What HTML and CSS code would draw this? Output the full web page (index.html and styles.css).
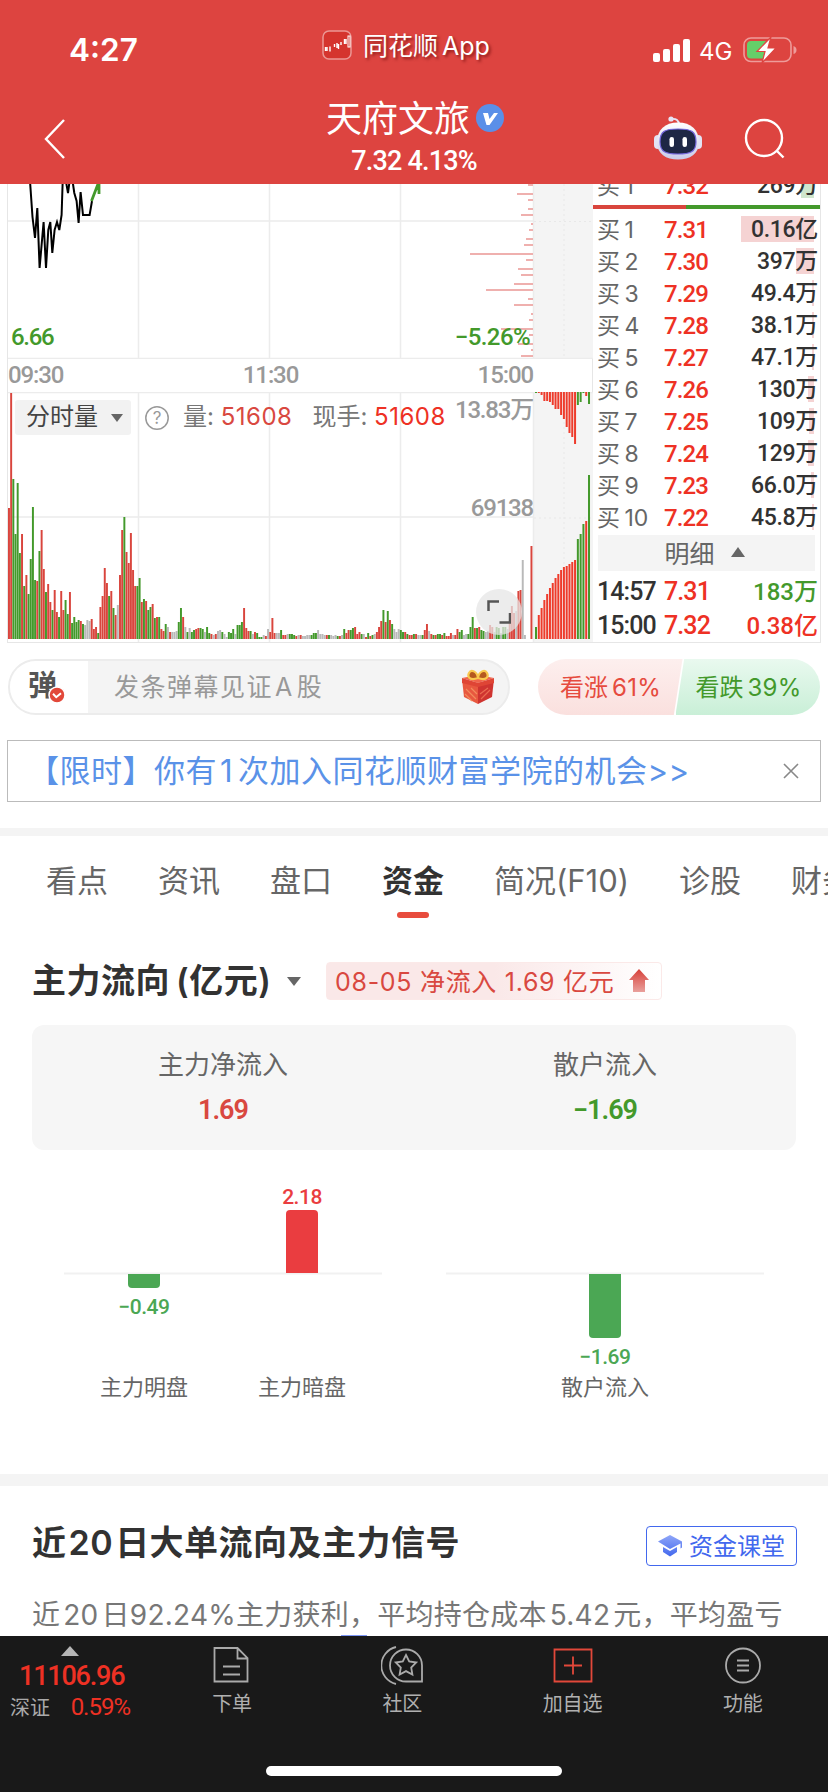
FILE: index.html
```html
<!DOCTYPE html>
<html lang="zh-CN">
<head>
    <meta charset="UTF-8">
    <meta name="viewport" content="width=device-width, initial-scale=1.0">
    <title>天府文旅 - 同花顺</title>
    <link rel="stylesheet" href="styles.css">
</head>
<body>
    <header>
        <div class="status-bar">
            <span class="time">4:27</span>
            <div class="app-name">
                <svg width="30" height="30" viewBox="0 0 30 30">
                    <rect x="1" y="1" width="28" height="28" rx="6" fill="#d5342e" stroke="#eb9794" stroke-width="1.5"/>
                    <path d="M3.5 17v4M5 17v4M8 16.5v5M12.5 17v-3M15 13v5M16.5 14v5M19 12v3M22.500 9v5M24 9v5" stroke="#fff" stroke-width="1.4"/>
                    <rect x="26" y="6" width="2" height="11" fill="none" stroke="#fff"/>
                </svg>
                <span>同花顺<b>App</b></span>
            </div>
            <div class="signal">
                <svg width="37" height="23" viewBox="0 0 37 23" fill="#fff">
                    <rect x="0" y="14" width="7" height="9" rx="2"/>
                    <rect x="10" y="10" width="7" height="13" rx="2"/>
                    <rect x="20" y="5" width="7" height="18" rx="2"/>
                    <rect x="30" y="0" width="7" height="23" rx="2"/>
                </svg>
                <span>4G</span>
                <svg width="54" height="28" viewBox="0 0 54 28">
                    <rect x="1" y="2" width="47" height="23.500" rx="7" fill="none" stroke="#ee9c9a" stroke-width="1.6"/>
                    <path d="M50.500 10q3 1 3 4t-3 4z" fill="#ee9c9a"/>
                    <path d="M8 5h15L16 14h5v8.500H8q-4 0-4-4V9q0-4 4-4z" fill="#65cf69"/>
                    <path d="M28 1L14 15.500h8L19 27l14-15h-8z" fill="#fff" stroke="#dd4440" stroke-width="1.200"/>
                </svg>
            </div>
        </div>
        <div class="nav-bar">
            <svg class="back" width="24" height="42" viewBox="0 0 24 42"><path d="M21 2L3 21l18 19" fill="none" stroke="#fff" stroke-width="2.400"/></svg>
            <div class="stock">
                <h1>天府文旅
                    <svg width="28" height="28" viewBox="0 0 28 28">
                        <circle cx="14" cy="14" r="14" fill="#5a8fe8"/>
                        <path d="M7 9h5l1.500 6L18 9h4l-8.500 12h-3z" fill="#fff"/>
                    </svg>
                </h1>
                <p class="num">7.32 4.13%</p>
            </div>
            <div class="nav-icons">
                <svg width="50" height="46" viewBox="0 0 50 46">
                    <defs>
                        <linearGradient id="head" x1="0" y1="0" x2="0" y2="1"><stop offset="0" stop-color="#fff"/><stop offset="1" stop-color="#c9cbe9"/></linearGradient>
                    </defs>
                    <path d="M18 3q8-1 8 6" fill="none" stroke="#e6e4f5" stroke-width="2"/>
                    <circle cx="18" cy="3" r="2.600" fill="#e6e4f5"/>
                    <rect x="1" y="19" width="8" height="14" rx="4" fill="#e3e3f4"/>
                    <rect x="41" y="19" width="8" height="14" rx="4" fill="#e3e3f4"/>
                    <path d="M25 6.500C38 6.500 46 14 46 26c0 12-9 17.500-21 17.500S4 38 4 26C4 14 12 6.500 25 6.500z" fill="url(#head)"/>
                    <path d="M25 13c13 0 18 2 18 13 0 10-6 12-18 12S7 36 7 26c0-11 5-13 18-13z" fill="#1e2745" stroke="#7467dc" stroke-width="1.200"/>
                    <rect x="16.500" y="21" width="4.500" height="10" rx="2.200" fill="#fff"/>
                    <rect x="29.500" y="21" width="4.500" height="10" rx="2.200" fill="#fff"/>
                </svg>
                <svg width="42" height="42" viewBox="0 0 42 42" fill="none" stroke="#fff" stroke-width="2.400">
                    <circle cx="20" cy="20" r="18"/>
                    <path d="M32.500 32.500l7 7"/>
                </svg>
            </div>
        </div>
    </header>

    <main>
        <!-- 分时走势 + 五档盘口 -->
        <section class="quote">
            <div class="charts">
                <div class="price-chart">
                    <svg id="price-svg" width="585" height="175" viewBox="0 0 585 175">
                        <rect x="525" y="0" width="60" height="175" fill="#f4f4f4"/>
                        <path d="M130.500 0v175M261.500 0v175M392.500 0v175M525.500 0v175M0 37h525M0 174.500h585" stroke="#ececec" stroke-width="1.500" fill="none"/>
                        <path d="M556 0v175M526 37.500h59" stroke="#e8e8e8" stroke-dasharray="2 3"/>
                        <polyline points="22,-3 24.500,33 27,54 29.300,24 31.600,84 35.600,38 38,84 40.300,46 42.300,38 44.300,69 46.600,46 49,38 51.300,46 53.600,31 54.600,0 57,-8 60,9 62,-6 65,0 66.300,9 68.600,17 70.600,39 72.600,8 75,31 81.600,31 84,17" fill="none" stroke="#000" stroke-width="2"/>
                        <path d="M83.500 17L90 0l-1 6 2-6v10" fill="none" stroke="#43992b" stroke-width="2.800"/>
                    </svg>
                    <span class="low num">6.66</span>
                    <span class="low-rate num">−5.26%</span>
                </div>
                <div class="time-axis num"><span>09:30</span><span>11:30</span><span>15:00</span></div>
                <div class="volume-chart">
                    <svg id="volume-svg" width="585" height="250" viewBox="0 0 585 250">
                        <rect x="525" y="0" width="60" height="250" fill="#f4f4f4"/>
                        <path d="M0 .5h585M0 125h525M130.500 0v250M261.500 0v250M392.500 0v250M525.500 0v250" stroke="#ececec" stroke-width="1.500" fill="none"/>
                        <path d="M556 0v250M526 126h59" stroke="#e8e8e8" stroke-dasharray="2 3"/>
                    </svg>
                    <div class="volume-head">
                        <span class="select">分时量<i class="caret-down"></i></span>
                        <svg width="26" height="26" viewBox="0 0 26 26"><circle cx="13" cy="13" r="11.200" fill="none" stroke="#999" stroke-width="1.500"/><text x="13" y="19" text-anchor="middle" class="q">?</text></svg>
                        <span class="vol">量: <b>51608</b></span>
                        <span class="hand">现手: <b>51608</b></span>
                    </div>
                    <span class="vol-max num">13.83万</span>
                    <span class="vol-mid num">69138</span>
                    <span class="expand"><svg width="24" height="24" viewBox="0 0 24 24" fill="none" stroke="#555" stroke-width="2.500"><path d="M1.500 11V1.500H12M23 13v9.500H12.500"/></svg></span>
                </div>
            </div>
            <div class="book">
                <div class="book-clip"><div class="row"><span>买 1</span><b>7.32</b><em>269万</em><i class="sell" style="width:13px"></i></div></div>
                <div class="ratio"></div>
                <div class="row"><span>买 1</span><b>7.31</b><em>0.16亿</em><i style="width:73px"></i></div>
                <div class="row"><span>买 2</span><b>7.30</b><em>397万</em><i style="width:18px"></i></div>
                <div class="row"><span>买 3</span><b>7.29</b><em>49.4万</em><i style="width:2px"></i></div>
                <div class="row"><span>买 4</span><b>7.28</b><em>38.1万</em><i style="width:2px"></i></div>
                <div class="row"><span>买 5</span><b>7.27</b><em>47.1万</em><i style="width:2px"></i></div>
                <div class="row"><span>买 6</span><b>7.26</b><em>130万</em><i style="width:6px"></i></div>
                <div class="row"><span>买 7</span><b>7.25</b><em>109万</em><i style="width:5px"></i></div>
                <div class="row"><span>买 8</span><b>7.24</b><em>129万</em><i style="width:6px"></i></div>
                <div class="row"><span>买 9</span><b>7.23</b><em>66.0万</em><i style="width:3px"></i></div>
                <div class="row"><span>买 10</span><b>7.22</b><em>45.8万</em><i style="width:2px"></i></div>
                <div class="detail-title">明细<i class="caret-up"></i></div>
                <div class="row deal"><span>14:57</span><b>7.31</b><em class="green">183万</em></div>
                <div class="row deal"><span>15:00</span><b>7.32</b><em class="red">0.38亿</em></div>
            </div>
        </section>

        <!-- 弹幕 -->
        <section class="danmu">
            <div class="danmu-input">
                <span class="danmu-switch">弹
                    <svg width="18" height="18" viewBox="0 0 18 18"><circle cx="9" cy="9" r="8" fill="#e2483a" stroke="#fff" stroke-width="1.500"/><path d="M5 7.800l3.200 3.400L13 7.200" fill="none" stroke="#fff" stroke-width="2"/></svg>
                </span>
                <span class="danmu-text">发条弹幕见证<b>A</b>股</span>
                <svg class="gift" width="34" height="36" viewBox="0 0 34 36">
                    <path d="M1 10L17 14v21L3 28z" fill="#e8583f"/>
                    <path d="M33 10L17 14v21l14-7z" fill="#cf3430"/>
                    <path d="M1 9l16-3 16 3-16 5z" fill="#f0644c"/>
                    <path d="M1 9l16 5v4L1 14zM33 9l-16 5v4l16-4z" fill="#df4535"/>
                    <path d="M5 20l10 10M4 25l7 7M10 19l6 6" stroke="#f28b5c" stroke-width="1.200"/>
                    <path d="M20 30l9-9M19 25l8-6" stroke="#ea6a50" stroke-width="1.200"/>
                    <path d="M17 9C9 12 6 8 8 4s8-2 9 5zM17 9c8 3 11-1 9-5s-8-2-9 5z" fill="#b5591f" stroke="#f9c94e" stroke-width="2.200"/>
                </svg>
            </div>
            <div class="vote">
                <span class="up">看涨<b>61%</b></span>
                <span class="down">看跌<b>39%</b></span>
            </div>
        </section>

        <div class="notice">
            <a>【限时】你有<b>1</b>次加入同花顺财富学院的机会&gt;&gt;</a>
            <svg width="16" height="16" viewBox="0 0 16 16"><path d="M1 1l14 14M15 1L1 15" stroke="#888" stroke-width="1.600"/></svg>
        </div>

        <nav class="tabs">
            <a>看点</a><a>资讯</a><a>盘口</a><a class="active">资金</a><a>简况(F10)</a><a>诊股</a><a>财务</a>
        </nav>

        <section class="flow">
            <div class="flow-title">
                <h2>主力流向<span>(亿元)</span></h2>
                <i class="caret-down"></i>
                <div class="tag"><span>08-05 净流入 1.69 亿元</span>
                    <svg width="20" height="24" viewBox="0 0 20 24"><defs><linearGradient id="arrow" x1="0" y1="0" x2="0" y2="1"><stop offset="0" stop-color="#d73f38"/><stop offset="1" stop-color="#e9a09c"/></linearGradient></defs><path d="M10 0l10 11h-4v12H4V11H0z" fill="url(#arrow)"/></svg>
                </div>
            </div>
            <div class="summary">
                <div><p>主力净流入</p><strong class="num red">1.69</strong></div>
                <div><p>散户流入</p><strong class="num green">−1.69</strong></div>
            </div>
            <div class="bar-charts">
                <svg width="318" height="230" viewBox="0 0 318 230">
                    <path d="M0 94.500h318" stroke="#f1f1f1" stroke-width="2"/>
                    <path d="M64 95h32v10q0 4-4 4H68q-4 0-4-4z" fill="#4ba754"/>
                    <path d="M222 94V35q0-4 4-4h24q4 0 4 4v59z" fill="#ea3d40"/>
                    <text x="80" y="135" class="val g">−0.49</text>
                    <text x="238" y="25" class="val r">2.18</text>
                    <text x="80" y="216" class="cat">主力明盘</text>
                    <text x="238" y="216" class="cat">主力暗盘</text>
                </svg>
                <svg width="318" height="230" viewBox="0 0 318 230">
                    <path d="M0 94.500h318" stroke="#f1f1f1" stroke-width="2"/>
                    <path d="M143 95h32v60q0 4-4 4h-24q-4 0-4-4z" fill="#4ba754"/>
                    <text x="159" y="185" class="val g">−1.69</text>
                    <text x="159" y="216" class="cat">散户流入</text>
                </svg>
            </div>
        </section>

        <section class="signal-card">
            <div class="signal-title">
                <h2>近<span>20</span>日大单流向及主力信号</h2>
                <a class="lesson">
                    <svg width="24" height="22" viewBox="0 0 24 22"><defs><linearGradient id="cap" x1="0" y1="0" x2="0" y2="1"><stop offset="0" stop-color="#8fa6f8"/><stop offset="1" stop-color="#4268ee"/></linearGradient></defs><path d="M12 0l12 6.500v6l-1.500 1V8.500L12 14 0 6.500zM5 12l7 4 7-4v5l-7 4.500L5 17z" fill="url(#cap)"/></svg>
                    <span>资金课堂</span>
                </a>
            </div>
            <p>近<span>20</span>日92.24%主力获利，平均持仓成本<span>5.42</span>元，平均盈亏</p>
            <i class="legend"></i>
        </section>
    </main>

    <footer>
        <div class="footer-nav">
            <div class="index">
                <i class="caret-up"></i>
                <b class="num">11106.96</b>
                <p>深证 <span class="num">0.59%</span></p>
            </div>
            <a>
                <svg width="40" height="40" viewBox="0 0 40 40"><path d="M2.500 3h23l10 10v23.500h-33zM25.500 3v10.500h10M11 21.500h17M11 29.500h17"/></svg>
                下单
            </a>
            <a>
                <svg width="42" height="40" viewBox="0 0 42 40"><path d="M15 2A19 19 0 0 0 15 39M41 36.500H25A16 16 0 1 1 41 20.500z"/><path d="M25 10l3.200 6.500 7 1-5 5 1.200 7-6.400-3.400-6.400 3.400 1.200-7-5-5 7-1z"/></svg>
                社区
            </a>
            <a>
                <svg class="add" width="40" height="40" viewBox="0 0 40 40"><path d="M1.500 4.500h37v32h-37zM20 11.500v18M11 20.500h18"/></svg>
                加自选
            </a>
            <a>
                <svg width="40" height="40" viewBox="0 0 40 40"><circle cx="20" cy="20.500" r="17"/><path d="M14 15.500h12M14 20.500h12M14 25.500h12"/></svg>
                功能
            </a>
        </div>
        <div class="home-bar"></div>
    </footer>
    <script src="script.js"></script>
</body>
</html>
```
FILE: styles.css
```css
* {
    box-sizing: border-box;
    margin: 0;
    padding: 0;
}

body {
    width: 828px;
    height: 1792px;
    overflow: hidden;
    display: flex;
    flex-direction: column;
    font-family: Inter, 'Noto Sans CJK SC', sans-serif;
    color: #323232;
    background-color: #fff;
}

i, em {
    font-style: normal;
}

svg {
    display: block;
    flex: none;
}

.num {
    font-family: Roboto, 'Noto Sans CJK SC', sans-serif;
}

.red {
    color: #d94840;
}

.green {
    color: #43992b;
}

.caret-down {
    border: 7px solid transparent;
    border-top: 9px solid #666;
    border-bottom: 0;
}

.caret-up {
    border: 7px solid transparent;
    border-bottom: 10px solid #666;
    border-top: 0;
}

/* 顶部 */
header {
    height: 184px;
    flex: none;
    background-color: #dd4440;
    color: #fff;
}

.status-bar {
    height: 92px;
    display: grid;
    grid-template-columns: 322px 1fr 175px;
}

.time {
    padding: 31px 0 0 69px;
    font-size: 31.5px;
    line-height: 38px;
    font-weight: 600;
}

.app-name {
    display: flex;
    align-items: center;
    height: 30px;
    margin-top: 30px;
    gap: 11px;
    font-size: 25px;
    text-shadow: 2px 2px 3px rgba(90,0,0,0.6);
}

.app-name span {
    margin-top: -3px;
}

.app-name b {
    margin-left: 4px;
    font-weight: 400;
}

.signal {
    display: flex;
    align-items: center;
    height: 28px;
    margin-top: 36px;
}

.signal span {
    margin: 3px 11px 0 9px;
    font-size: 24px;
}

.nav-bar {
    height: 92px;
    display: grid;
    grid-template-columns: 322px 1fr 175px;
}

.back {
    margin: 26px 0 0 43px;
}

.stock {
    width: 184px;
}

.stock h1 {
    display: flex;
    align-items: center;
    gap: 6px;
    height: 48px;
    padding-left: 4px;
    font-size: 36px;
    font-weight: 400;
    white-space: nowrap;
}

.stock h1 svg {
    margin-top: 4px;
}

.stock p {
    padding-top: 2px;
    font-size: 27px;
    font-weight: 500;
    line-height: 38px;
    letter-spacing: -0.8px;
    text-align: center;
}

.nav-icons {
    display: flex;
    gap: 41px;
    padding-top: 24px;
}

.nav-icons svg:last-child {
    margin-top: 2px;
}

main {
    flex: 1;
    min-height: 0;
    overflow: hidden;
}

/* 行情 */
.quote {
    display: flex;
    height: 459px;
    margin: 0 7px;
    border: 1px solid #e6e6e6;
    border-top: 0;
}

.charts {
    width: 585px;
    border-right: 1px solid #e6e6e6;
}

.price-chart, .volume-chart {
    position: relative;
}

.low, .low-rate {
    position: absolute;
    bottom: 8px;
    color: #43992b;
    font-size: 24px;
    line-height: 28px;
    font-weight: 500;
}

.low {
    left: 3px;
    letter-spacing: -1.3px;
}

.low-rate {
    right: 62px;
    letter-spacing: -0.6px;
}

.time-axis {
    display: grid;
    grid-template-columns: 1fr 1fr 1fr;
    width: 525px;
    height: 33px;
    font-size: 24px;
    line-height: 33px;
    font-weight: 500;
    letter-spacing: -1.1px;
    color: #999;
}

.time-axis span:nth-child(2) {
    text-align: center;
}

.time-axis span:nth-child(3) {
    text-align: right;
}

.volume-head {
    position: absolute;
    top: 8px;
    left: 7px;
    display: flex;
    align-items: center;
    color: #777;
    font-size: 24px;
    line-height: 32px;
}

.select {
    display: flex;
    align-items: center;
    gap: 13px;
    width: 116px;
    height: 35px;
    margin-right: 13px;
    padding: 0 0 2px 11px;
    border-radius: 3px;
    background-color: #f2f2f2;
    color: #444;
}

.select .caret-down {
    margin-top: 2px;
    border-width: 8px 6px 0;
}

.q {
    font-size: 17px;
    fill: #999;
}

.vol {
    margin: -2px 0 0 13px;
}

.hand {
    margin: -2px 0 0 20px;
}

.volume-head b {
    font-weight: 400;
    letter-spacing: 0.5px;
    color: #d94840;
}

.volume-head .hand b {
    color: #ee3124;
}

.vol-max, .vol-mid {
    position: absolute;
    right: 59px;
    font-size: 24px;
    line-height: 28px;
    font-weight: 500;
    color: #999;
    letter-spacing: -1.2px;
}

.vol-max {
    top: 4px;
}

.vol-mid {
    top: 102px;
}

.expand {
    position: absolute;
    left: 468px;
    top: 197px;
    width: 46px;
    height: 46px;
    padding: 11px;
    border-radius: 50%;
    background-color: rgba(230,230,230,0.75);
}

.book {
    flex: 1;
    overflow: hidden;
}

.book-clip {
    height: 21px;
    overflow: hidden;
}

.book-clip .row {
    margin-top: -14px;
}

.ratio {
    height: 4px;
    margin-bottom: 5px;
    background: linear-gradient(90deg, #d9453d 41%, #43992b 41%);
}

.row {
    position: relative;
    display: grid;
    grid-template-columns: 67px 50px 1fr;
    align-items: center;
    height: 32px;
    padding: 0 2px 0 4px;
    font-family: Roboto, 'Noto Sans CJK SC', sans-serif;
    font-size: 24px;
    line-height: 32px;
    white-space: nowrap;
}

.row span {
    color: #666;
    font-size: 23px;
    font-family: Inter, 'Noto Sans CJK SC', sans-serif;
    word-spacing: -2px;
}

.row b {
    font-weight: 500;
    color: #ee3124;
    letter-spacing: -0.9px;
}

.row em {
    position: relative;
    z-index: 1;
    text-align: right;
    font-size: 23px;
    font-weight: 500;
    letter-spacing: -0.3px;
}

/* 挂单量占比底色 */
.row i {
    position: absolute;
    right: 6px;
    top: 2px;
    height: 26px;
    background-color: #f5d3d3;
}

.row i.sell {
    background-color: #cfe6cd;
}

.detail-title {
    display: flex;
    align-items: center;
    justify-content: center;
    gap: 16px;
    height: 36px;
    margin: 1px 5px 4px;
    padding: 0 4px 2px 0;
    font-size: 25px;
    color: #666;
    background-color: #f4f4f4;
}

.row.deal {
    height: 34px;
    font-size: 25px;
}

.row.deal span {
    font-family: Roboto, sans-serif;
    font-size: 25px;
    font-weight: 500;
    color: #323232;
    letter-spacing: -0.9px;
}

.row.deal em {
    font-size: 24px;
    letter-spacing: 0;
}

.row.deal em.red {
    color: #ee3124;
}

/* 弹幕 */
.danmu {
    display: flex;
    justify-content: space-between;
    margin: 16px 8px 0;
}

.danmu b, .notice b {
    font-weight: 400;
}

.danmu-input {
    display: flex;
    align-items: center;
    width: 502px;
    height: 56px;
    padding-right: 13px;
    border: 2px solid #ececec;
    border-radius: 28px;
    background-color: #f4f4f4;
    overflow: hidden;
}

.danmu-switch {
    position: relative;
    width: 78px;
    height: 52px;
    padding-left: 18px;
    background-color: #fff;
    color: #555;
    font-size: 29px;
    line-height: 50px;
    font-weight: 700;
}

.danmu-switch svg {
    position: absolute;
    left: 38px;
    top: 25px;
}

.danmu-text {
    flex: 1;
    margin-top: -4px;
    padding-left: 26px;
    color: #999;
    font-size: 25px;
    letter-spacing: 1.500px;
}

.danmu-text b {
    margin: 0 3px 0 2px;
}

.vote {
    display: flex;
    width: 282px;
    height: 56px;
    font-size: 24px;
    line-height: 58px;
    border-radius: 28px;
    overflow: hidden;
}

.vote span {
    width: 145px;
    white-space: nowrap;
}

.vote b {
    margin-left: 4px;
    letter-spacing: 0.3px;
}

.up {
    padding-left: 22px;
    color: #e64b3e;
    background: linear-gradient(#fdefee, #fae0de);
    clip-path: polygon(0 0, 100% 0, 94% 100%, 0 100%);
}

.down {
    margin-left: -7px;
    padding-left: 20px;
    color: #43992b;
    background: linear-gradient(#e9f9ef, #c9efd7);
    clip-path: polygon(6% 0, 100% 0, 100% 100%, 0 100%);
}

.notice {
    display: flex;
    align-items: center;
    justify-content: space-between;
    height: 62px;
    margin: 25px 7px 26px;
    padding: 0 21px 0 20px;
    border: 1.5px solid #bbb;
    color: #5a92e8;
    font-size: 31px;
    letter-spacing: 0.5px;
}

.notice a {
    margin-top: -5px;
}

.notice b {
    margin: 0 5px 0 3px;
}

/* 标签栏 */
.tabs {
    display: flex;
    gap: 50px;
    height: 106px;
    padding-left: 46px;
    border-top: 8px solid #f4f4f4;
    font-size: 31px;
    line-height: 90px;
    color: #666;
    white-space: nowrap;
}

.tabs .active {
    position: relative;
    color: #323232;
    font-weight: 600;
}

.tabs .active::after {
    content: '';
    position: absolute;
    left: 15px;
    top: 76px;
    width: 32px;
    height: 6px;
    border-radius: 3px;
    background-color: #e84c3d;
}

/* 主力流向 */
.flow {
    height: 540px;
    padding: 28px 32px 0;
}

.flow-title {
    display: flex;
    align-items: center;
    height: 38px;
}

h2 {
    margin-top: -6px;
    font-size: 34px;
    font-weight: 600;
    letter-spacing: 0.5px;
    white-space: nowrap;
}

.flow-title h2 span {
    margin-left: 6px;
}

.flow-title .caret-down {
    margin: 0 25px 0 auto;
}

.flow-title h2 {
    min-width: 238px;
}

.tag {
    display: flex;
    align-items: center;
    justify-content: space-between;
    width: 336px;
    height: 38px;
    margin-right: 134px;
    padding: 0 12px 0 8px;
    border: 1px solid #fbe9e8;
    border-radius: 4px;
    background: linear-gradient(90deg, #fae8e8 50%, #fff);
    color: #d94840;
    font-size: 25px;
    letter-spacing: 0.7px;
    white-space: nowrap;
}

.tag span {
    margin-top: -3px;
}

.summary {
    display: grid;
    grid-template-columns: 1fr 1fr;
    height: 125px;
    margin-top: 25px;
    padding-top: 21px;
    border-radius: 12px;
    background-color: #f6f6f6;
    text-align: center;
}

.summary p {
    color: #666;
    font-size: 26px;
    line-height: 38px;
}

.summary strong {
    display: block;
    font-size: 27px;
    font-weight: 600;
    line-height: 52px;
    letter-spacing: -1px;
}

.bar-charts {
    display: flex;
    justify-content: space-between;
    padding: 29px 32px 0;
}

.bar-charts text {
    text-anchor: middle;
}

.val {
    font-family: Roboto, sans-serif;
    font-size: 21px;
    font-weight: 500;
    letter-spacing: -0.5px;
}

.val.r {
    fill: #ea3d40;
}

.val.g {
    fill: #4ba754;
}

.cat {
    font-size: 22px;
    fill: #666;
}

.signal-card {
    border-top: 12px solid #f4f4f4;
    padding: 36px 31px 0 32px;
}

.signal-title {
    display: flex;
    justify-content: space-between;
    align-items: center;
    height: 48px;
}

.signal-card h2 {
    margin-top: -12px;
}

.signal-card h2 span {
    margin: 0 2px;
}

.signal-card p span {
    margin: 0 3px;
}

.lesson {
    display: flex;
    align-items: center;
    justify-content: center;
    gap: 7px;
    width: 151px;
    height: 40px;
    border: 1.5px solid #4268ee;
    border-radius: 4px;
    color: #4268ee;
    font-size: 24px;
}

.lesson span {
    margin-top: -4px;
}

.signal-card p {
    margin-top: 25px;
    font-size: 28px;
    line-height: 40px;
    letter-spacing: 0.25px;
    color: #777;
    white-space: nowrap;
}

.legend {
    display: block;
    width: 26px;
    height: 8px;
    margin: 0 0 0 309px;
    background-color: #7d97f5;
}

/* 底部导航 */
footer {
    height: 156px;
    flex: none;
    background-color: #191919;
    color: #aaa;
}

.footer-nav {
    display: grid;
    grid-template-columns: 147px repeat(4, 1fr);
    height: 130px;
    font-size: 20px;
}

.footer-nav a {
    display: flex;
    flex-direction: column;
    align-items: center;
    padding-top: 9px;
    line-height: 38px;
    color: #b0b0b0;
}

.footer-nav a svg {
    fill: none;
    stroke: #aaa;
    stroke-width: 1.800;
}

.footer-nav a .add {
    stroke: #e2483a;
}

.index .caret-up {
    display: block;
    width: 0;
    margin: 10px 0 0 61px;
    border-width: 0 9px 10px;
    border-bottom-color: #b5b5b5;
}

.index b {
    display: block;
    padding: 1px 0 0 19px;
    font-size: 27px;
    line-height: 38px;
    font-weight: 500;
    color: #ee3124;
    letter-spacing: -1.2px;
}

.index p {
    padding-left: 10px;
    line-height: 24px;
}

.index p span {
    margin-left: 15px;
    font-size: 24px;
    color: #ee3124;
    letter-spacing: -1px;
}

.home-bar {
    width: 296px;
    height: 10px;
    margin: 0 auto;
    border-radius: 5px;
    background-color: #fff;
}
```
FILE: script.js
```js
const COLORS = { r: '#d9453d', g: '#43992b', x: '#b9b9b9', R: '#ee3b2b' };

// 分时成交量: 颜色 + 高度
const volumes = ('r131 r246 g160 g105 g156 g86 r105 g53 r64 g45 g80 g132 g59 r58 g88 r109 r70 g47 r55 r37 ' +
    'g29 r49 r27 g22 r48 r29 g39 g25 r47 g16 g22 g17 g19 r18 g15 x14 x19 x18 r20 r10 ' +
    'r12 g6 r32 r43 r71 r56 g43 r48 g31 r24 x34 r64 r109 g122 r87 r76 r106 r69 r53 g53 ' +
    'g61 r37 g40 r38 g29 g32 r35 g21 r22 g22 r10 r8 g15 x12 r7 x7 x7 x8 g17 g31 ' +
    'r22 x12 g7 x11 g7 g9 r10 r11 g11 g10 x7 g12 g6 r5 x4 r5 x8 x9 g7 x5 ' +
    'x2 g7 g6 g10 x5 g14 g14 g17 r31 r11 r8 g8 x5 r7 g6 g2 g2 x4 r3 x10 ' +
    'r7 r21 r6 x6 x6 g9 r4 r4 x5 g5 g5 g4 r3 x4 r4 x3 x3 x4 x4 g4 ' +
    'g6 g6 x9 x5 x5 x4 r4 g4 x4 x3 x4 g3 r3 x4 g10 r6 r9 g9 g11 r12 ' +
    'r5 r7 g5 x5 r2 g6 r3 g4 x5 r7 r12 r18 g29 r17 g28 r19 g15 x10 x7 x10 ' +
    'g9 g7 r7 g5 r4 r4 g5 r5 x4 x4 g4 r9 r15 x8 r5 g4 r4 g5 g5 r4 ' +
    'g6 r3 r3 r6 x4 r4 r10 g7 g9 x4 x5 g5 g12 g22 r11 g11 r12 g9 g8 x7 ' +
    'x8 r14 r12 x7 g12 g11 x6 g12 g12 x10 r18 r33 r26 x28 r48 r49 x79 x4 x0 x0 r93').split(' ');

// 集合竞价
const auction = 'g12 R24 R31 R39 R45 R51 R56 R61 R65 R69 R72 R73 R75 R77 R79 g100 g105 g115 R118 g164'.split(' ');
const auctionTop = 'g1 R1 R3 R9 R9 R10 R13 R17 R17 R23 R27 R35 R41 R45 R52 g13 g10 g1 R4 g12'.split(' ');

// 价格分布 [y, 长度]
const spread = [[1, 5], [10, 16], [16, 5], [25, 5], [31, 12], [40, 2], [46, 4], [55, 7], [61, 9], [70, 63], [76, 7],
    [85, 15], [91, 12], [100, 19], [106, 47], [115, 5], [121, 19], [130, 2], [136, 4], [145, 32], [151, 4],
    [160, 15], [166, 2], [172, 12]];

function addRect(svg, x, y, w, h, color) {
    const rect = document.createElementNS('http://www.w3.org/2000/svg', 'rect');
    rect.setAttribute('x', x);
    rect.setAttribute('y', y);
    rect.setAttribute('width', w);
    rect.setAttribute('height', h);
    rect.setAttribute('fill', color);
    svg.appendChild(rect);
}

const volumeSvg = document.getElementById('volume-svg');
const BASE = 247;

volumes.forEach((v, i) => {
    const h = Number(v.slice(1));
    addRect(volumeSvg, i * 2.177, BASE - h, 1.95, h, COLORS[v[0]]);
});
auction.forEach((v, i) => {
    const h = Number(v.slice(1));
    addRect(volumeSvg, 527 + i * 2.79, BASE - h, 2, h, COLORS[v[0]]);
});
auctionTop.forEach((v, i) => {
    addRect(volumeSvg, 527 + i * 2.79, 0, 2, Number(v.slice(1)), COLORS[v[0]]);
});

const priceSvg = document.getElementById('price-svg');
spread.forEach(([y, len]) => addRect(priceSvg, 525 - len, y - 1, len, 2, '#efb0ae'));
```
